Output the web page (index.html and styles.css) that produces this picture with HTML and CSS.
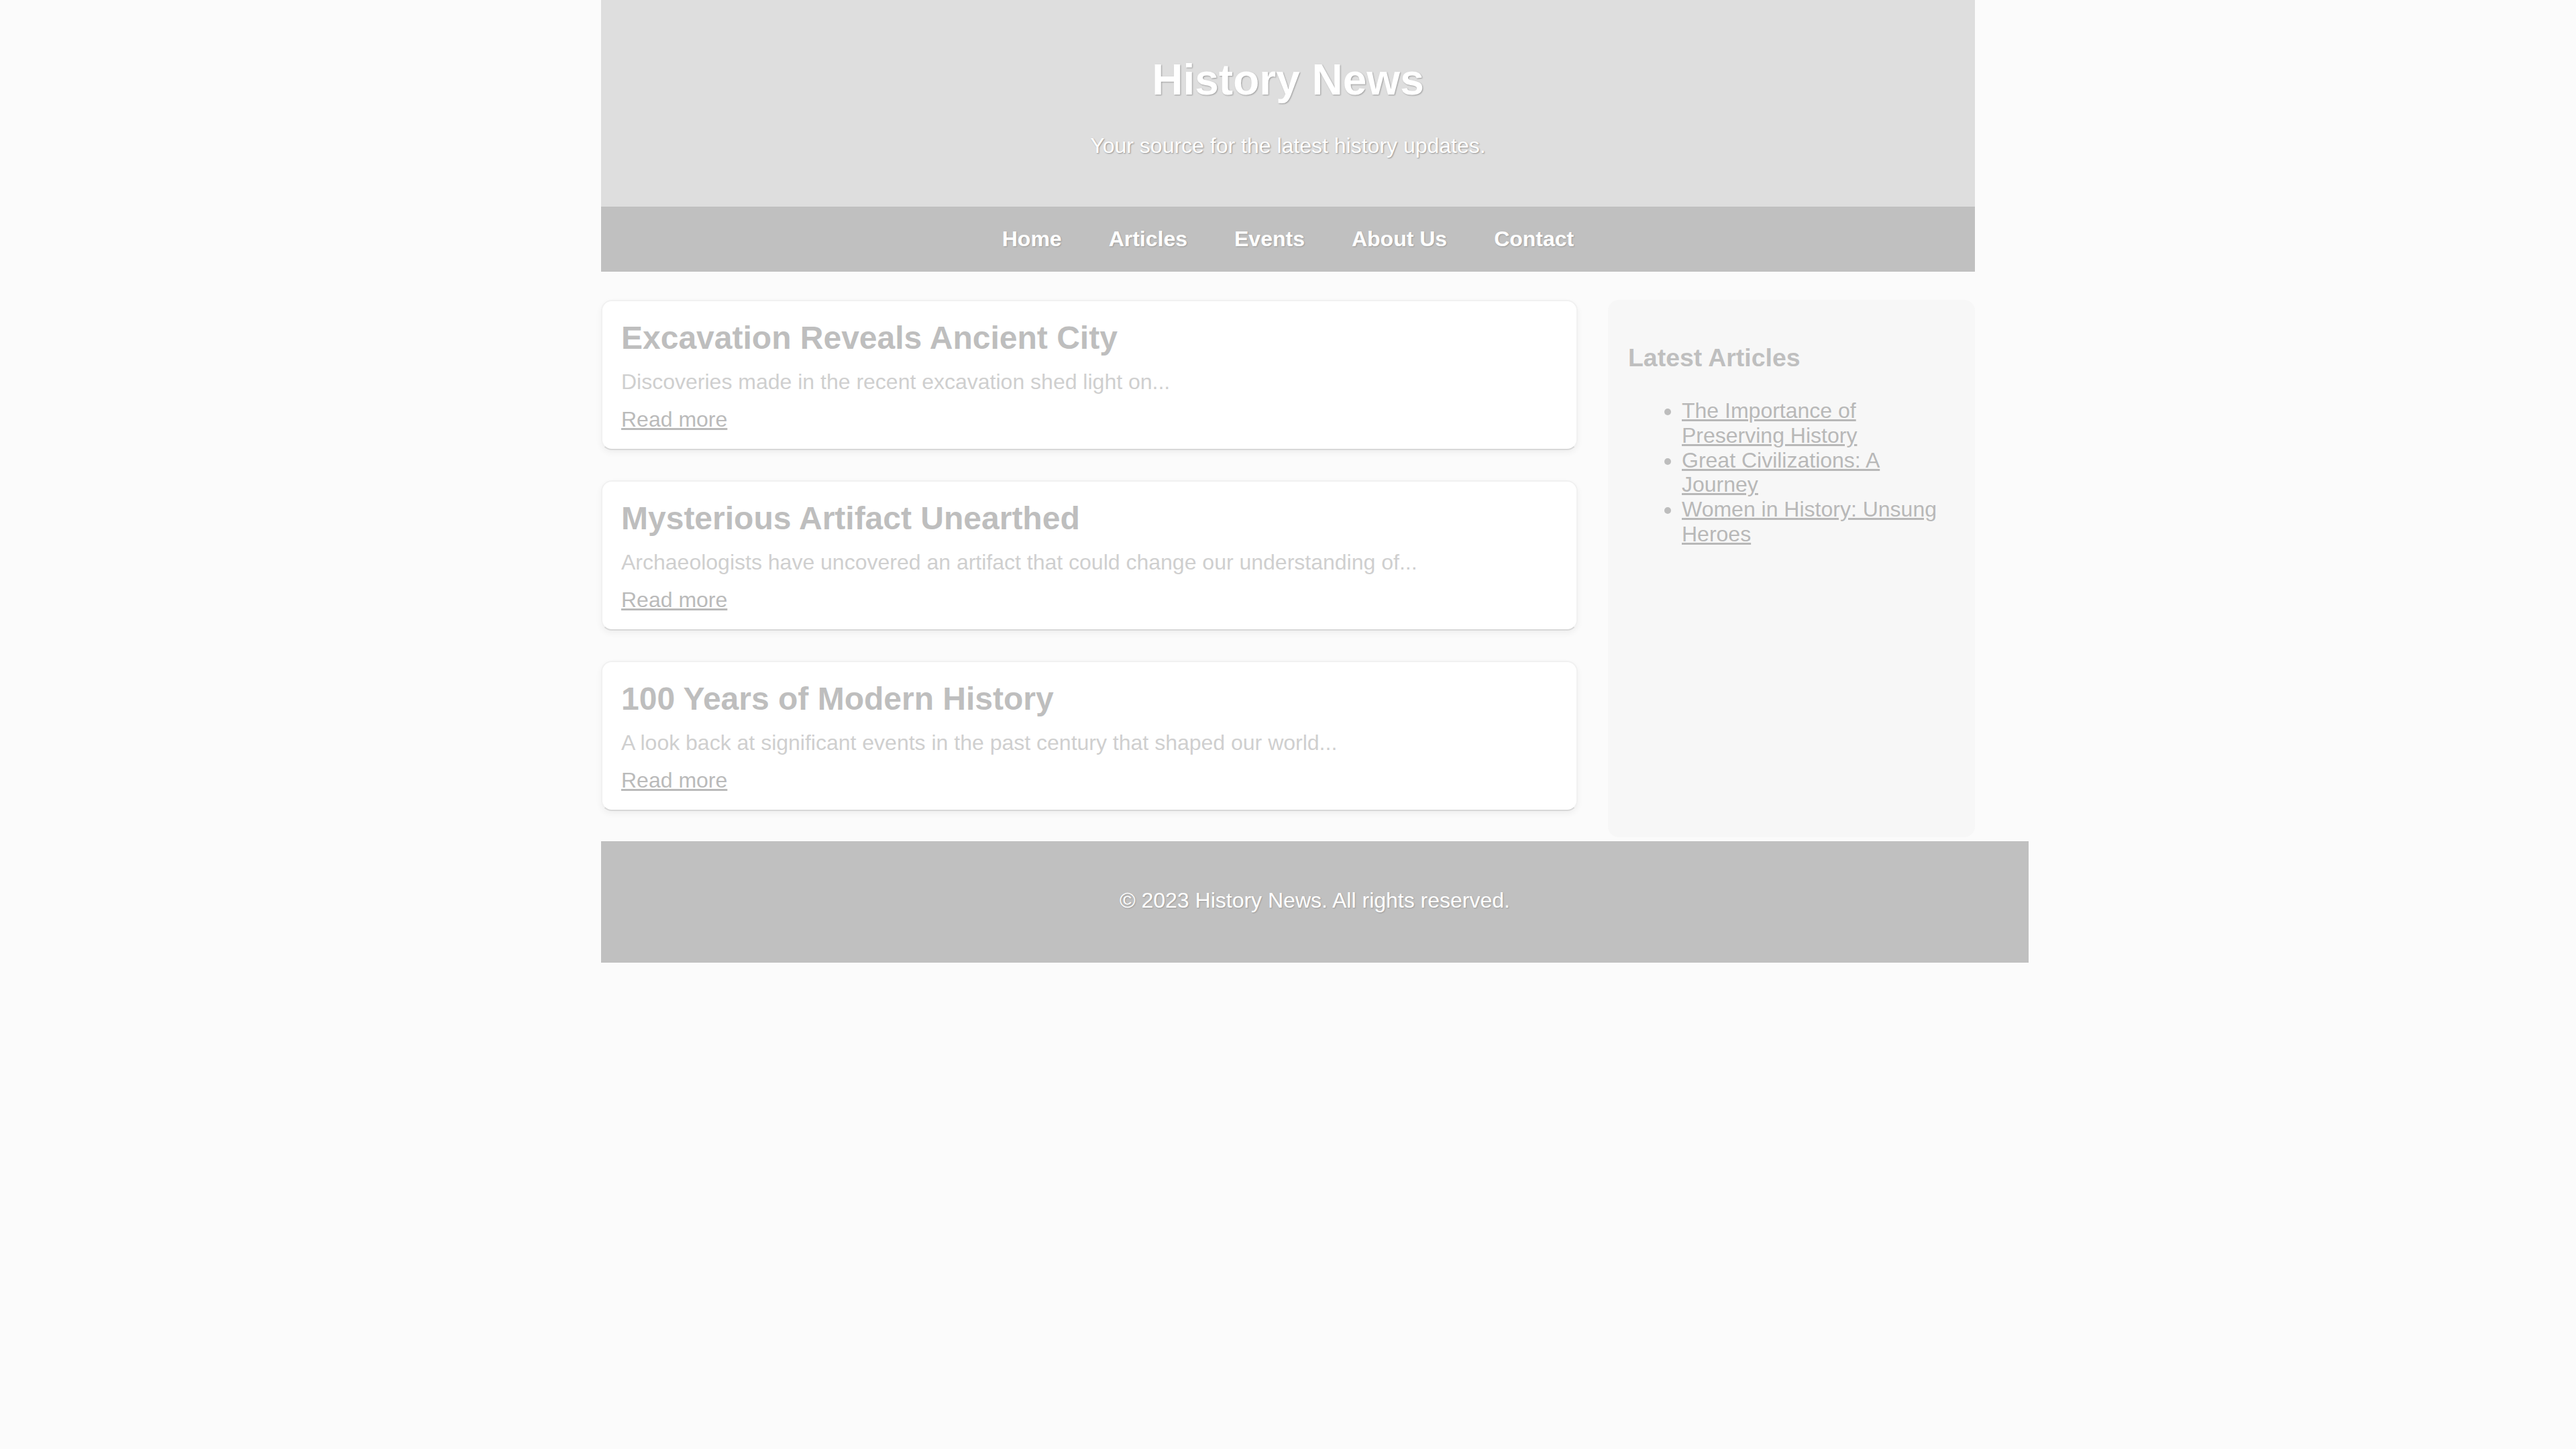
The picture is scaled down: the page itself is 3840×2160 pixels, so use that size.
FILE: index.html
```html
<!DOCTYPE html>
<html lang="en">
<head>
<meta charset="utf-8">
<title>History News</title>
<link rel="stylesheet" href="styles.css">
</head>
<body>
<div class="page">
  <header class="site-header">
    <h1 class="site-title">History News</h1>
    <p class="site-tagline">Your source for the latest history updates.</p>
  </header>
  <nav class="site-nav">
    <ul class="nav-list">
      <li><a href="#">Home</a></li>
      <li><a href="#">Articles</a></li>
      <li><a href="#">Events</a></li>
      <li><a href="#">About Us</a></li>
      <li><a href="#">Contact</a></li>
    </ul>
  </nav>
  <div class="content">
    <main class="articles">
      <article class="card">
        <h2 class="card-title">Excavation Reveals Ancient City</h2>
        <p class="card-text">Discoveries made in the recent excavation shed light on...</p>
        <a class="card-link" href="#">Read more</a>
      </article>
      <article class="card">
        <h2 class="card-title">Mysterious Artifact Unearthed</h2>
        <p class="card-text">Archaeologists have uncovered an artifact that could change our understanding of...</p>
        <a class="card-link" href="#">Read more</a>
      </article>
      <article class="card">
        <h2 class="card-title">100 Years of Modern History</h2>
        <p class="card-text">A look back at significant events in the past century that shaped our world...</p>
        <a class="card-link" href="#">Read more</a>
      </article>
    </main>
    <aside class="sidebar">
      <h3 class="sidebar-title">Latest Articles</h3>
      <ul class="sidebar-list">
        <li><a href="#">The Importance of Preserving History</a></li>
        <li><a href="#">Great Civilizations: A Journey</a></li>
        <li><a href="#">Women in History: Unsung Heroes</a></li>
      </ul>
    </aside>
  </div>
  <footer class="site-footer">
    <p class="footer-text">© 2023 History News. All rights reserved.</p>
  </footer>
</div>
</body>
</html>
```

FILE: styles.css
```css
html, body {
  margin: 0;
  padding: 0;
  background: #fbfbfb;
  font-family: "Liberation Sans", Arial, sans-serif;
  font-size: 32px;
}

.page {
  width: 2048px;
  margin: 0 auto;
}

.site-header {
  background: #dedede;
  padding: 40px;
  text-align: center;
  color: #ffffff;
}

.site-title {
  font-size: 64px;
  font-weight: bold;
  margin: 42px 0 43px;
  text-shadow: 1px 1px 2px rgba(0, 0, 0, 0.3);
}

.site-tagline {
  font-size: 32px;
  margin: 32px 0;
  text-shadow: 1px 1px 2px rgba(0, 0, 0, 0.35);
}

.site-nav {
  background: #c0c0c0;
  padding: 30px 0;
}

.nav-list {
  list-style: none;
  margin: 0;
  padding: 0;
  display: flex;
  justify-content: center;
  gap: 70px;
}

.nav-list a {
  color: #ffffff;
  font-weight: bold;
  text-decoration: none;
  text-shadow: 1px 1px 2px rgba(0, 0, 0, 0.2);
}

.content {
  display: flex;
  justify-content: space-between;
  align-items: stretch;
  margin-top: 42px;
}

.articles {
  width: 1456px;
}

.card {
  background: #ffffff;
  border: 2px solid #f1f1f1;
  border-bottom-color: #d8d8d8;
  border-radius: 16px;
  box-shadow: 0 4px 10px rgba(0, 0, 0, 0.05);
  padding: 28px 28px 26px;
  margin-bottom: 45px;
}

.card-title {
  font-size: 48px;
  line-height: 54px;
  font-weight: bold;
  color: #bebebe;
  margin: 0 0 20px;
}

.card-text {
  font-size: 32px;
  line-height: 36px;
  color: #cfcfcf;
  margin: 0 0 20px;
}

.card-link {
  display: block;
  width: max-content;
  font-size: 32px;
  line-height: 36px;
  color: #bababa;
  text-decoration: underline;
}

.sidebar {
  width: 547px;
  box-sizing: border-box;
  background: #f7f7f7;
  border-radius: 16px;
  padding: 28px 30px 30px;
  margin-bottom: 6px;
}

.sidebar-title {
  font-size: 37.44px;
  font-weight: bold;
  color: #bfbfbf;
  margin: 37px 0 39px;
}

.sidebar-list {
  margin: 32px 0;
  padding-left: 80px;
  color: #bdbdbd;
}

.sidebar-list li {
  line-height: 36.8px;
}

.sidebar-list a {
  color: #b8b8b8;
  text-decoration: underline;
}

.site-footer {
  width: 100%;
  background: #c0c0c0;
  padding: 38px 40px 42px;
  text-align: center;
  color: #ffffff;
}

.footer-text {
  margin: 32px 0;
  text-shadow: 1px 1px 2px rgba(0, 0, 0, 0.2);
}
```
